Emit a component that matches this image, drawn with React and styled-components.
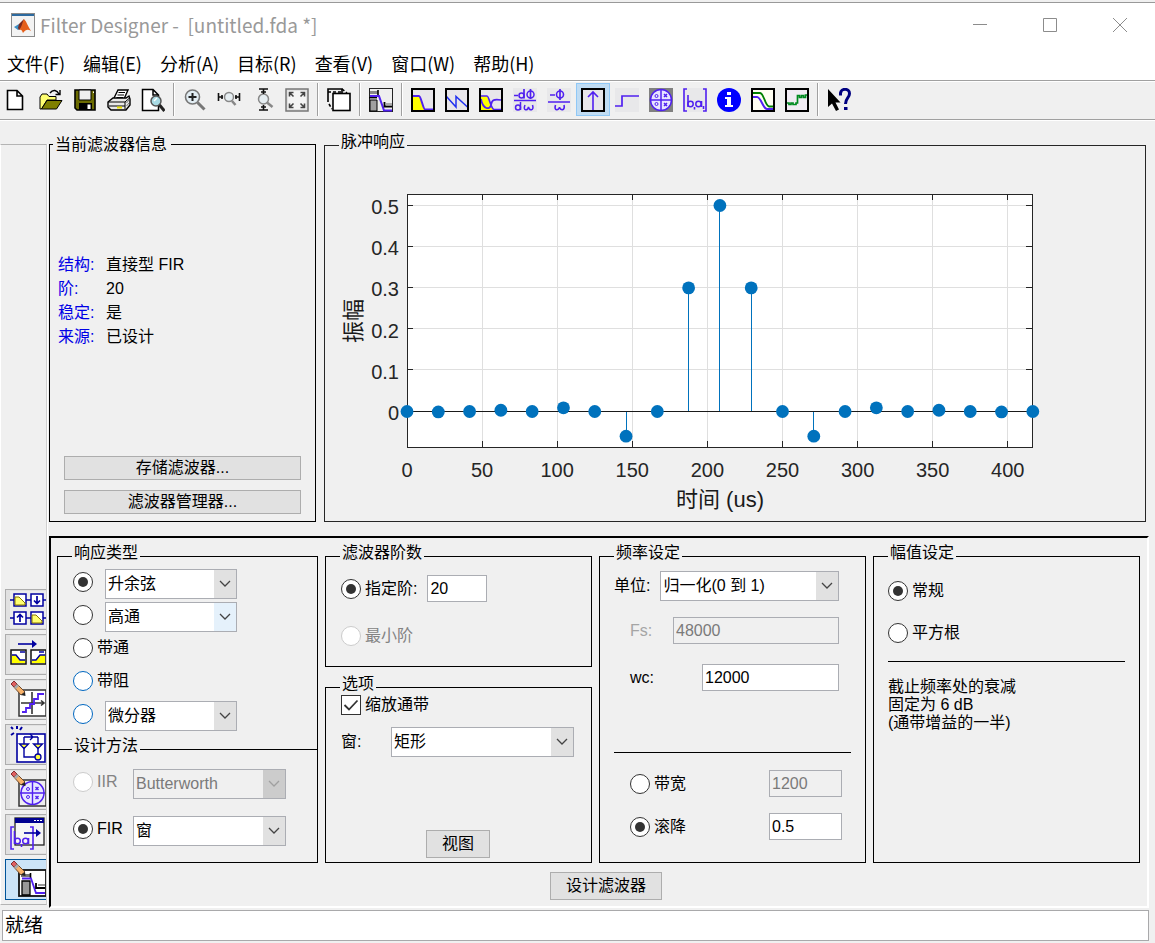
import React from 'react';
import styled, { createGlobalStyle, css } from 'styled-components';

const UI = '"Liberation Sans", "Noto Sans CJK SC", sans-serif';

const GlobalStyle = createGlobalStyle`
  *, *::before, *::after { box-sizing: border-box; }
  body { margin: 0; background: #f0f0f0; font: 16px/20px ${UI}; color: #000; }
  button, input, select { font: inherit; color: inherit; margin: 0; }
`;

/* ---------- window frame ---------- */

const Window = styled.div`
  display: flex;
  flex-direction: column;
  min-height: 100vh;
  padding-top: 2px;
  background: #f0f0f0;
`;

const TitleBar = styled.header`
  display: flex;
  align-items: center;
  height: 44px;
  padding-left: 11px;
  background: #fff;
  border-top: 1px solid #999;
`;

const Title = styled.h1`
  flex: 1;
  margin: 0 0 0 5px;
  font: 19px/28px "Noto Sans CJK SC", sans-serif;
  color: #999;
  white-space: pre;
`;

const WindowButton = styled.button`
  display: grid;
  place-items: center;
  width: 70px;
  height: 40px;
  padding: 0;
  border: 0;
  background: none;
`;

const MenuBar = styled.nav`
  display: flex;
  gap: 18px;
  height: 34px;
  padding: 0 7px;
  background: #fff;
`;

const MenuItem = styled.button`
  padding: 0;
  border: 0;
  background: none;
  font: 18px/34px "Noto Sans CJK SC", sans-serif;
  white-space: nowrap;
`;

const ToolBar = styled.div`
  display: flex;
  align-items: flex-start;
  height: 41px;
  padding-top: 2px;
  border-top: 1px solid #a0a0a0;
  border-bottom: 1px solid #fff;
  box-shadow: inset 0 1px #fff, inset 0 -1px #a0a0a0;
`;

const ToolButton = styled.button`
  display: grid;
  place-items: center;
  width: 34px;
  height: 33px;
  padding: 0;
  border: 1px solid ${(p) => (p.$active ? '#90c8f6' : 'transparent')};
  background: ${(p) => (p.$active ? '#c0dcf3' : 'none')};
`;

const ToolSeparator = styled.span`
  width: 2px;
  height: 33px;
  margin: 0 3px;
  border-left: 1px solid #a0a0a0;
  border-right: 1px solid #fff;
`;

const Body = styled.div`
  display: flex;
  flex: 1;
`;

const Rail = styled.aside`
  display: flex;
  flex-direction: column;
  justify-content: flex-end;
  gap: 4px;
  width: 47px;
  margin: 23px 2px 4px 0;
  padding: 0 0 4px 4px;
  border: 1px solid #b4b4b4;
  border-left-color: #fff;
  border-right: 1px solid #d0d0d0;
  box-shadow: 1px 0 #fff;
`;

const RailButton = styled.button`
  display: grid;
  align-items: center;
  height: 41px;
  padding: 0 0 0 4px;
  overflow: hidden;
  border: 1px solid ${(p) => (p.$active ? '#005499' : '#adadad')};
  border-right: 0;
  background: ${(p) => (p.$active ? '#cce4f7' : '#e1e1e1')};
`;

const Main = styled.main`
  flex: 1;
  min-width: 0;
  padding-top: 12px;
`;

const TopRow = styled.div`
  display: grid;
  grid-template-columns: minmax(0, 267fr) minmax(0, 822fr);
  gap: 8px;
  padding-right: 9px;
`;

const StatusBar = styled.footer`
  height: 31px;
  margin: 1px 6px 2px 2px;
  padding: 0 2px;
  border: 1px solid #a9a9ab;
  background: #fff;
  font-size: 19px;
  line-height: 30px;
`;

/* ---------- group boxes ---------- */

const Group = styled.fieldset`
  display: flex;
  flex-direction: column;
  min-width: 0;
  margin: 0;
  padding: 0;
  border: 1px solid ${(p) => p.$line || '#000'};
  ${(p) => p.$open && css`border-bottom: 0;`}
  ${(p) => p.$joined && css`margin-top: -12px;`}
`;

const Legend = styled.legend`
  margin-left: ${(p) => (p.$level ? 3 : 14)}px;
  padding: ${(p) => (p.$level ? '4px 4px 2px 2px' : '1px 2px 7px 2px')};
  line-height: 16px;
`;

const GroupBody = styled.div`
  display: flex;
  flex-direction: column;
  flex: 1;
  gap: ${(p) => p.$gap || 0}px;
  margin-top: -8px;
  padding: ${(p) => p.$pad || '0'};
`;

const InfoBody = styled.div`
  display: flex;
  flex-direction: column;
  flex: 1;
  gap: 10px;
  padding: 98px 14px 7px;
`;

const InfoList = styled.dl`
  display: grid;
  grid-template-columns: 48px 1fr;
  margin: 0 -6px auto;
  line-height: 24px;
  dt { color: #0000e6; }
  dd { margin: 0; }
`;

const PushButton = styled.button`
  height: ${(p) => (p.$wide ? 24 : 28)}px;
  padding: 0 15px;
  border: 1px solid #adadad;
  background: #e1e1e1;
  line-height: 20px;
  white-space: nowrap;
`;

/* ---------- design panel ---------- */

const DesignPanel = styled.section`
  display: flex;
  flex-direction: column;
  margin: 14px 6px 0 0;
  padding: 6px 7px 6px 6px;
  border: 2px solid #fff;
  border-top-color: #000;
  border-left-color: #000;
`;

const Columns = styled.div`
  display: grid;
  grid-template-columns: minmax(0, 261fr) repeat(3, minmax(0, 267fr));
  gap: 7px;
`;

const Column = styled.div`
  display: flex;
  flex-direction: column;
  gap: ${(p) => p.$gap || 0}px;
  > :last-child { flex: 1; }
`;

const DesignAction = styled.div`
  display: flex;
  justify-content: center;
  padding: 9px 0 0 15px;
`;

const OptionRow = styled.div`
  display: flex;
  gap: 12px;
  height: 30px;
`;

const FieldRow = styled.div`
  display: flex;
  align-items: center;
  justify-content: ${(p) => (p.$start ? 'flex-start' : 'space-between')};
  gap: 10px;
  margin-top: ${(p) => p.$top || 0}px;
  padding-left: ${(p) => p.$indent || 0}px;
  padding-right: ${(p) => (p.$wide ? 9 : 12)}px;
  height: ${(p) => p.$h || 27}px;
`;

const Choice = styled.label`
  display: flex;
  align-items: center;
  gap: 4px;
  height: ${(p) => p.$h || 26}px;
  ${(p) => p.$w && css`width: ${p.$w}px;`}
  color: ${(p) => (p.$off ? '#838383' : '#000')};
  white-space: nowrap;
`;

const Radio = styled.input.attrs({ type: 'radio' })`
  appearance: none;
  display: grid;
  place-items: center;
  flex: none;
  width: 20px;
  height: 20px;
  border: 1px solid ${(p) => (p.$hot ? '#0067c0' : '#333')};
  border-radius: 50%;
  background: #fff;
  &:checked::before {
    content: '';
    width: 10px;
    height: 10px;
    border-radius: 50%;
    background: #333;
  }
  &:disabled { border-color: #ccc; }
`;

const CheckCell = styled.span`
  display: grid;
  width: 20px;
  height: 20px;
  > * { grid-area: 1 / 1; }
  svg { pointer-events: none; }
`;

const CheckBox = styled.input.attrs({ type: 'checkbox' })`
  appearance: none;
  width: 20px;
  height: 20px;
  border: 1px solid #333;
  background: #fff;
`;

const TextBox = styled.input.attrs({ type: 'text' })`
  flex: none;
  width: ${(p) => p.$w}px;
  height: 27px;
  padding: 0 2px;
  border: 1px solid #abadb3;
  border-radius: 0;
  background: #fff;
  &:disabled { background: #f0f0f0; color: #7a7a7a; }
`;

const Caption = styled.label`
  flex: none;
  color: ${(p) => (p.$off ? '#a5a5a5' : '#000')};
  white-space: nowrap;
  ${(p) => p.$w && css`width: ${p.$w}px;`}
`;

const SelectCell = styled.span`
  display: grid;
  flex: none;
  width: ${(p) => p.$w}px;
  height: 30px;
  border: 1px solid #abadb3;
  background: ${(p) => (p.$off ? '#f0f0f0' : '#fff')};
  > * { grid-area: 1 / 1; }
`;

const SelectControl = styled.select`
  appearance: none;
  width: 100%;
  padding: 0 24px 0 2px;
  border: 0;
  background: none;
  &:disabled { color: #7a7a7a; opacity: 1; }
`;

const SelectArrow = styled.span`
  display: grid;
  place-items: center;
  justify-self: end;
  width: 22px;
  pointer-events: none;
  background: ${(p) => (p.$off ? '#ccc' : p.$hot ? '#e5f1fb' : '#e1e1e1')};
`;

const Rule = styled.hr`
  width: 100%;
  margin: ${(p) => p.$top}px 0 ${(p) => p.$bottom}px;
  border: 0;
  border-top: 1px solid #000;
`;

const Note = styled.p`
  margin: 0;
  line-height: 18px;
`;

const ViewRow = styled.div`
  display: flex;
  margin-top: 61px;
  padding-left: 85px;
`;

const ChartSvg = styled.svg`
  display: block;
  width: 100%;
  height: auto;
  font-family: ${UI};
`;

/* ---------- small pieces ---------- */

function Dropdown({ id, label, value, width, disabled, hot }) {
  return (
    <SelectCell $w={width} $off={disabled}>
      <SelectControl id={id} aria-label={label} disabled={disabled} defaultValue={value}>
        <option>{value}</option>
      </SelectControl>
      <SelectArrow $off={disabled} $hot={hot}>
        <svg width="12" height="8" viewBox="0 0 12 8" fill="none" stroke={disabled ? '#a0a0a0' : '#444'} strokeWidth="1.3">
          <path d="M1 1L6 6L11 1" />
        </svg>
      </SelectArrow>
    </SelectCell>
  );
}

const V = '#5020f0';

function Box({ fill = '#e8e6ea', children }) {
  return (
    <>
      <rect x="1" y="1" width="22" height="22" fill={fill} />
      {children}
      <rect x="1" y="1" width="22" height="22" fill="none" stroke="#000" strokeWidth="2" />
    </>
  );
}

const toolIcons = {
  新建: <path d="M2.500 2.500H12L17.500 8V21.500H2.500ZM12 2.500V8H17.500" fill="#fff" stroke="#000" strokeWidth="1.600" />,
  打开: (
    <>
      <path d="M1 21V9L3 6H8L10 8.500H17V12H8L2.500 21Z" fill="#ffff70" stroke="#000" />
      <path d="M2.500 21L8 12.500H23L17.500 21Z" fill="#808000" stroke="#000" />
      <path d="M11 5C14 1 18 2 20 6M21 2V6.500H16.500" fill="none" stroke="#000" strokeWidth="1.400" />
    </>
  ),
  保存: (
    <>
      <path d="M2 2H22V22H4L2 20Z" fill="#6b6b00" stroke="#000" strokeWidth="1.600" />
      <path d="M6 2H18V12H6Z" fill="#efefef" stroke="#000" />
      <path d="M6 15H19V22H6Z" fill="#000" />
      <path d="M14.500 16.500H17.500V21H14.500Z" fill="#fff" />
      <path d="M20 3.500H21V5H20Z" fill="#fff" />
    </>
  ),
  打印: (
    <>
      <path d="M7 10L11 2H21L17 11" fill="#fff" stroke="#000" strokeWidth="1.400" />
      <path d="M11.500 4.500H18M10.500 7H17M9.500 9.500H16" stroke="#000" />
      <path d="M1 14L6 10H19L22 8L23 11V17L19 22H4L1 19Z" fill="#e8e8e8" stroke="#000" strokeWidth="1.400" />
      <path d="M1 14H18L22.500 10M18 14V21M2 18H18" fill="none" stroke="#000" />
      <path d="M10 18.500H15V20.500H10Z" fill="#e8e000" />
      <path d="M19.500 15L22 12M19.500 18L22 15" stroke="#777" />
    </>
  ),
  打印预览: (
    <>
      <path d="M1.500 1.500H12L17.500 7V22.500H1.500ZM12 1.500V7H17.500" fill="#fff" stroke="#000" strokeWidth="1.500" />
      <circle cx="15" cy="13" r="5" fill="#a9dbe4" stroke="#555" strokeWidth="1.500" />
      <path d="M13 13L16 10" stroke="#fff" strokeWidth="1.500" />
      <path d="M18.500 17L23.500 23" stroke="#222" strokeWidth="3" />
    </>
  ),
  放大: (
    <>
      <circle cx="9.500" cy="9" r="7" fill="#e2edf3" stroke="#777" strokeWidth="1.600" />
      <path d="M5.500 9H13.500M9.500 5V13" stroke="#222" strokeWidth="2" />
      <path d="M14.500 14.500L21.500 21.500" stroke="#777" strokeWidth="3" />
    </>
  ),
  水平缩放: (
    <>
      <circle cx="12" cy="9" r="4.500" fill="#e6eef2" stroke="#888" strokeWidth="1.500" />
      <path d="M15 13L18.500 17" stroke="#888" strokeWidth="2.500" />
      <path d="M1.500 5V13M22.500 5V13M2 9H6M18 9H22M5 7V11M19 7V11" stroke="#111" strokeWidth="1.600" />
    </>
  ),
  垂直缩放: (
    <>
      <circle cx="12.500" cy="11" r="5" fill="#e6eef2" stroke="#888" strokeWidth="1.500" />
      <path d="M16 14.500L21.500 19" stroke="#888" strokeWidth="2.500" />
      <path d="M8 1H17M8 22H17M12.500 1V6M12.500 17V22M10 4H15M10 19H15" stroke="#111" strokeWidth="1.600" />
    </>
  ),
  还原视图: (
    <>
      <rect x="1" y="1" width="22" height="22" fill="#e3e3e3" stroke="#777" strokeWidth="1.500" />
      <rect x="3" y="3" width="18" height="18" fill="#f4f4f4" />
      <path d="M4.500 8.500V4.500H8.500M4.500 4.500L8.500 8.500M15.500 4.500H19.500V8.500M19.500 4.500L15.500 8.500M4.500 15.500V19.500H8.500M4.500 19.500L8.500 15.500M15.500 19.500H19.500V15.500M19.500 19.500L15.500 15.500" fill="none" stroke="#444" strokeWidth="1.600" />
    </>
  ),
  新建图窗: (
    <>
      <path d="M1 14V1H15V5" fill="#efefef" stroke="#000" strokeWidth="1.600" />
      <path d="M1 4H15M15 1L20 5M2 16L5 21" stroke="#000" strokeDasharray="3 2" strokeWidth="1.600" />
      <rect x="6" y="5.500" width="17" height="17" fill="#fff" stroke="#000" strokeWidth="1.600" />
    </>
  ),
  滤波器设定: (
    <>
      <rect x="0.500" y="0.500" width="23" height="23" fill="#efefef" stroke="#222" />
      <path d="M1 12H8V23H1Z" fill="#a0a0a0" stroke="#000" />
      <path d="M1 3H9V6H1Z" fill="#888" />
      <path d="M9 2V7" stroke="#000" strokeWidth="1.600" />
      <path d="M1 8H10L15 22.500H23" fill="none" stroke={V} strokeWidth="2" />
      <path d="M0 9.700H8" stroke="#000" strokeWidth="1.400" />
      <path d="M15.500 14V18.500H23" fill="none" stroke="#000" strokeWidth="1.800" />
      <path d="M17 15H23V17.500H17Z" fill="#aaa" />
    </>
  ),
  幅值响应: (
    <Box>
      <path d="M2 8H9L14 22H2Z" fill="#ffff00" />
      <path d="M2 8H8C10 8 12 21 14 21.500H22" fill="none" stroke={V} strokeWidth="2" />
    </Box>
  ),
  相位响应: (
    <Box>
      <path d="M1 8L11 19V8.500L23 19.500" fill="none" stroke="#2030f0" strokeWidth="1.500" />
    </Box>
  ),
  幅值和相位响应: (
    <Box>
      <path d="M2 8H8L14 22H2Z" fill="#ffff00" />
      <path d="M2 8H8C10 8 12 21 15 21.500H22M2 11C4 22 11 22 12 17S14 11 22 12" fill="none" stroke={V} strokeWidth="1.700" />
    </Box>
  ),
  群延迟: (
    <>
      <rect width="24" height="24" fill="#e8e8ea" />
      <path d="M1 12.500H23M1 7.500H5M11 1V10.500M17.500 1V11" stroke={V} strokeWidth="1.700" />
      <circle cx="8.500" cy="7.500" r="2.500" fill="none" stroke={V} strokeWidth="1.500" />
      <circle cx="17.500" cy="6.500" r="3.500" fill="none" stroke={V} strokeWidth="1.500" />
      <circle cx="5" cy="19.500" r="2.500" fill="none" stroke={V} strokeWidth="1.500" />
      <path d="M7.500 14V22M12 17C9.500 23 14.500 23 15.500 19C16.500 23 21.500 23 19.500 17" fill="none" stroke={V} strokeWidth="1.500" />
    </>
  ),
  相位延迟: (
    <>
      <rect width="24" height="24" fill="#e8e8ea" />
      <path d="M1 14H23M3 7H8M13 1V12" stroke={V} strokeWidth="1.700" />
      <circle cx="13" cy="6.500" r="3.500" fill="none" stroke={V} strokeWidth="1.600" />
      <path d="M8.500 17C6.500 23 12 23 12.500 19C13 23 18.500 23 17 17" fill="none" stroke={V} strokeWidth="1.600" />
    </>
  ),
  脉冲响应: (
    <Box>
      <path d="M12 23V4M7 9L12 4L17 9" fill="none" stroke={V} strokeWidth="1.600" />
    </Box>
  ),
  阶跃响应: (
    <>
      <rect width="24" height="24" fill="#e8e8ea" />
      <path d="M0 18H7V8H24" fill="none" stroke={V} strokeWidth="1.700" />
    </>
  ),
  零极点图: (
    <>
      <rect width="24" height="24" fill="#808080" />
      <circle cx="12" cy="12" r="10.500" fill="#e8e4ff" stroke={V} strokeWidth="1.500" />
      <path d="M12 1V23M1 12H23M15 6L18 9M18 6L15 9M15 15L18 18M18 15L15 18" stroke={V} strokeWidth="1.500" />
      <circle cx="7.500" cy="8" r="1.500" fill="none" stroke={V} />
      <circle cx="7.500" cy="16" r="1.500" fill="none" stroke={V} />
    </>
  ),
  滤波器系数: (
    <>
      <rect width="24" height="24" fill="#e8e8ea" />
      <path d="M4 1H1V23H4M20 1H23V23H20M5 7V19M11.500 19V21.500M18.500 13V19M20.500 18V21" fill="none" stroke={V} strokeWidth="1.600" />
      <circle cx="7.500" cy="16" r="2.700" fill="none" stroke={V} strokeWidth="1.500" />
      <circle cx="15.500" cy="16" r="2.700" fill="none" stroke={V} strokeWidth="1.500" />
    </>
  ),
  滤波器信息: (
    <>
      <circle cx="12" cy="12" r="12" fill="#0000ff" />
      <path d="M10 4H14V7H10ZM8 9H14V17H16V19H8V17H10V11H8Z" fill="#fff" />
    </>
  ),
  幅值估计: (
    <Box fill="#fffef2">
      <path d="M2 9H6C10 9 12 21 16 21H22" fill="none" stroke={V} strokeWidth="2" />
      <path d="M2 5H9C13 5 14 18 18 18.500H22" fill="none" stroke="#008000" strokeWidth="1.800" />
    </Box>
  ),
  舍入噪声: (
    <Box fill="#f1ecf4">
      <path d="M2 15H4V16.500H6V15H8V16.500H11V15H12.500V7.500H14.500V9.500H16.500V7.500H18.500V9.500H20.500V7H22" fill="none" stroke="#008a20" strokeWidth="1.700" />
    </Box>
  ),
  这是什么: (
    <>
      <path d="M1 1V19L5 15.500L9 23L12 21.500L8.500 14.500H13.500Z" fill="#000" />
      <path d="M13.500 7.500V5C14 0 22.500 0 22.500 5.500C22.500 10 18.500 10 18.500 16" fill="none" stroke="#000080" strokeWidth="3" />
      <path d="M17 19H20.500V22H17Z" fill="#000080" />
    </>
  ),
};

const toolGroups = [
  ['新建', '打开', '保存', '打印', '打印预览'],
  ['放大', '水平缩放', '垂直缩放', '还原视图'],
  ['新建图窗'],
  ['滤波器设定'],
  ['幅值响应', '相位响应', '幅值和相位响应', '群延迟', '相位延迟', '脉冲响应', '阶跃响应', '零极点图', '滤波器系数', '滤波器信息', '幅值估计', '舍入噪声'],
  ['这是什么'],
];

const N = '#0000a0';

function Pencil() {
  return (
    <>
      <path d="M2 4L5 1L15 11L11 14Z" fill="#f7b26a" stroke="#6b4a30" />
      <path d="M1 3L4 0L7 3L4 6Z" fill="#e06060" stroke="#803030" />
      <path d="M4 6L7 3L9 5L6 8Z" fill="#aaa" />
      <path d="M11 14L15 11L15.500 15Z" fill="#222" />
    </>
  );
}

const railIcons = [
  ['创建多速率滤波器', (
    <>
      <path d="M0 9H36M0 27H36" stroke={N} strokeWidth="1.500" />
      {[[4, 3], [21, 3], [4, 21], [21, 21]].map(([x, y]) => (
        <rect key={`${x}-${y}`} x={x} y={y} width="12" height="12" fill="#fff" stroke={N} strokeWidth="1.500" />
      ))}
      <path d="M5 6H9L15 12V14H5ZM22 24H26L32 30V32H22Z" fill="#ffff70" stroke="#887700" />
      <path d="M27 5V12M24 9.500L27 12.500L30 9.500M10 31V24M7 26.500L10 23.500L13 26.500" fill="none" stroke={N} strokeWidth="1.700" />
    </>
  )],
  ['变换滤波器', (
    <>
      <path d="M8 8H25" stroke={N} strokeWidth="1.600" />
      <path d="M22 4L27 8L22 12Z" fill={N} />
      <rect x="1" y="14" width="15" height="14" fill="#fff" stroke="#111" strokeWidth="1.500" />
      <rect x="21" y="14" width="15" height="14" fill="#fff" stroke="#111" strokeWidth="1.500" />
      <path d="M2 19H6L10 24H15V27H2ZM22 24H26L30 19H35V27H22Z" fill="#ffff00" />
      <path d="M2 19H6L10 24H15M22 24H26L30 19H35M10 16H15M29 16H34" fill="none" stroke={N} strokeWidth="1.400" />
    </>
  )],
  ['设置量化参数', (
    <>
      <rect x="9" y="9" width="27" height="26" fill="#fff" stroke="#333" strokeWidth="1.500" />
      <path d="M11 22H34M22 11V33M31 19.500L34 22L31 24.500" fill="none" stroke="#333" strokeWidth="1.600" />
      <path d="M12 31H16V27H20V23H24V18H28V13H34" fill="none" stroke={V} strokeWidth="1.800" />
      <Pencil />
    </>
  )],
  ['实现模型', (
    <>
      <path d="M1 1L3 3M7 0V3M12 1L10 4M1 9L4 7" stroke={N} strokeWidth="2" />
      <rect x="7" y="8" width="28" height="28" fill="#fff" stroke={N} strokeWidth="1.600" />
      <path d="M14 11H28M14 11V31H25M28 11V31M20 8L23 11L20 14" fill="none" stroke={N} strokeWidth="1.400" />
      <path d="M9.500 18H18.500L14 22.500ZM23.500 18H32.500L28 22.500Z" fill="#ffff40" stroke={N} strokeWidth="1.300" />
      <circle cx="28" cy="31" r="3" fill="#ffff40" stroke={N} strokeWidth="1.300" />
    </>
  )],
  ['零极点编辑器', (
    <>
      <rect x="9" y="9" width="27" height="26" fill="#eee" stroke="#333" strokeWidth="1.500" />
      <circle cx="22.500" cy="22" r="11.500" fill="#e8e8ff" stroke={V} strokeWidth="1.500" />
      <path d="M22.500 10V34M10 22H35M25.500 16L28.500 19M28.500 16L25.500 19M25.500 25L28.500 28M28.500 25L25.500 28" stroke={V} strokeWidth="1.400" />
      <circle cx="18" cy="18" r="1.500" fill="none" stroke={V} />
      <circle cx="18" cy="26" r="1.500" fill="none" stroke={V} />
      <Pencil />
    </>
  )],
  ['导入滤波器', (
    <>
      <rect x="5" y="2" width="29" height="27" fill="#f5f5f5" stroke="#222" strokeWidth="1.300" />
      <path d="M5 2H34V7H5Z" fill="#000090" />
      <path d="M24 4.500H32" stroke="#fff" strokeDasharray="2 1" />
      <path d="M4 11H1V33H4M20 11H23V33H20M4.500 15V28M11.500 28V31M18.500 22V28" fill="none" stroke={V} strokeWidth="1.600" />
      <circle cx="7.500" cy="25" r="2.800" fill="none" stroke={V} strokeWidth="1.500" />
      <circle cx="15.500" cy="25" r="2.800" fill="none" stroke={V} strokeWidth="1.500" />
      <path d="M14 17H28" stroke={N} strokeWidth="1.600" />
      <path d="M26 13L31 17L26 21Z" fill={N} />
    </>
  )],
  ['设计滤波器', (
    <>
      <rect x="9" y="9" width="27" height="26" fill="#fff" stroke="#111" strokeWidth="1.800" />
      <path d="M12 20H20V34H12Z" fill="#999" stroke="#000" strokeWidth="1.300" />
      <path d="M11 13H20V16H11Z" fill="#777" />
      <path d="M20.500 12V17" stroke="#000" strokeWidth="1.600" />
      <path d="M12 17.500H21L26 32H35" fill="none" stroke={V} strokeWidth="1.800" />
      <path d="M26 22V27H35" fill="none" stroke="#000" strokeWidth="1.800" />
      <path d="M28 23H35V25H28Z" fill="#999" />
      <Pencil />
    </>
  )],
];

/* ---------- impulse response chart ---------- */

const PLOT = { left: 82, top: 45, width: 625, height: 253, zero: 262 };
const response = [0, -0.001, 0, 0.003, 0, 0.009, 0, -0.06, 0, 0.3, 0.5, 0.3, 0, -0.06, 0, 0.009, 0, 0.003, 0, -0.001, 0];
const xTicks = [0, 50, 100, 150, 200, 250, 300, 350, 400];
const yTicks = [0, 0.1, 0.2, 0.3, 0.4, 0.5];
const toX = (us) => PLOT.left + us * 1.502;
const toY = (v) => PLOT.zero - v * 412;

function ImpulseChart() {
  const right = PLOT.left + PLOT.width;
  const bottom = PLOT.top + PLOT.height;
  return (
    <ChartSvg viewBox="0 0 820 372" role="img" aria-label="脉冲响应">
      <rect x={PLOT.left} y={PLOT.top} width={PLOT.width} height={PLOT.height} fill="#fff" />
      <g shapeRendering="crispEdges">
        {xTicks.slice(1).map((t) => (
          <React.Fragment key={t}>
            <path d={`M${toX(t)} ${PLOT.top}V${bottom}`} stroke="#dfdfdf" />
            <path d={`M${toX(t)} ${PLOT.top}v6M${toX(t)} ${bottom}v-6`} stroke="#262626" />
          </React.Fragment>
        ))}
        {yTicks.slice(1).map((t) => (
          <React.Fragment key={t}>
            <path d={`M${PLOT.left} ${toY(t)}H${right}`} stroke="#dfdfdf" />
            <path d={`M${PLOT.left} ${toY(t)}h6M${right} ${toY(t)}h-6`} stroke="#262626" />
          </React.Fragment>
        ))}
        <rect x={PLOT.left} y={PLOT.top} width={PLOT.width} height={PLOT.height} fill="none" stroke="#262626" />
        {response.map((v, i) => (
          <path key={i} d={`M${toX(i * 20.833)} ${PLOT.zero}V${toY(v)}`} stroke="#0072bd" />
        ))}
        <path d={`M${PLOT.left} ${PLOT.zero}H${right}`} stroke="#1a1a1a" />
      </g>
      {response.map((v, i) => (
        <circle key={i} cx={toX(i * 20.833)} cy={toY(v) + 0.5} r="6.400" fill="#0072bd" />
      ))}
      <g fontSize="20" fill="#262626">
        {xTicks.map((t) => (
          <text key={t} x={toX(t)} y="328" textAnchor="middle">{t}</text>
        ))}
        {yTicks.map((t) => (
          <text key={t} x="74" y={toY(t) + 9} textAnchor="end">{t}</text>
        ))}
      </g>
      <g fontSize="22" fill="#1a1a1a" textAnchor="middle">
        <text x="395" y="358">时间 (us)</text>
        <text transform="translate(36 172) rotate(-90)">振幅</text>
      </g>
    </ChartSvg>
  );
}

/* ---------- page ---------- */

const menus = ['文件(F)', '编辑(E)', '分析(A)', '目标(R)', '查看(V)', '窗口(W)', '帮助(H)'];

const windowButtons = [
  ['最小化', 'M1 7.500H15'],
  ['最大化', 'M1.500 1.500H14.500V14.500H1.500Z'],
  ['关闭', 'M1 1L15 15M15 1L1 15'],
];

export default function App() {
  return (
    <Window>
      <GlobalStyle />
      <TitleBar>
        <svg width="24" height="24" viewBox="0 0 24 24" aria-hidden="true">
          <rect x="0.500" y="0.500" width="23" height="23" fill="#f3f3f3" stroke="#8a8a8a" />
          <path d="M1 1H23V3H1Z" fill="#2d6a9f" />
          <path d="M3 14L8 11L11 15L7 17Z" fill="#3d8fc4" />
          <path d="M8 11L13 6L12 14L8 17L7 15Z" fill="#7a2a20" />
          <path d="M13 6C16 9 17 14 20 18C17 16 15 16 12 20C11 17 10 16 8 17C11 14 11 10 13 6Z" fill="#e5601c" />
        </svg>
        <Title>{'Filter Designer -  [untitled.fda *]'}</Title>
        {windowButtons.map(([name, d]) => (
          <WindowButton key={name} aria-label={name}>
            <svg width="16" height="16" viewBox="0 0 16 16" fill="none" stroke="#8c8c8c"><path d={d} /></svg>
          </WindowButton>
        ))}
      </TitleBar>
      <MenuBar>
        {menus.map((m) => <MenuItem key={m}>{m}</MenuItem>)}
      </MenuBar>
      <ToolBar role="toolbar">
        {toolGroups.map((group, g) => (
          <React.Fragment key={group[0]}>
            {g > 0 && <ToolSeparator />}
            {group.map((name) => (
              <ToolButton key={name} aria-label={name} $active={name === '脉冲响应'}>
                <svg width="24" height="24" viewBox="0 0 24 24">{toolIcons[name]}</svg>
              </ToolButton>
            ))}
          </React.Fragment>
        ))}
      </ToolBar>

      <Body>
        <Rail>
          {railIcons.map(([name, art], i) => (
            <RailButton key={name} aria-label={name} $active={i === railIcons.length - 1}>
              <svg width="37" height="37" viewBox="0 0 37 37">
                {i < railIcons.length - 1 && <rect width="37" height="37" fill="#ececec" />}
                {art}
              </svg>
            </RailButton>
          ))}
        </Rail>

        <Main>
          <TopRow>
            <Group>
              <Legend $level>当前滤波器信息</Legend>
              <InfoBody>
                <InfoList>
                  <dt>结构:</dt><dd>直接型 FIR</dd>
                  <dt>阶:</dt><dd>20</dd>
                  <dt>稳定:</dt><dd>是</dd>
                  <dt>来源:</dt><dd>已设计</dd>
                </InfoList>
                <PushButton $wide>存储滤波器...</PushButton>
                <PushButton $wide>滤波器管理器...</PushButton>
              </InfoBody>
            </Group>
            <Group $line="#262626">
              <Legend>脉冲响应</Legend>
              <GroupBody><ImpulseChart /></GroupBody>
            </Group>
          </TopRow>

          <DesignPanel>
            <Columns>
              <Column>
                <Group $open>
                  <Legend>响应类型</Legend>
                  <GroupBody $gap={3} $pad="9px 15px 18px">
                    <OptionRow>
                      <Choice><Radio name="response" aria-label="升余弦" defaultChecked /></Choice>
                      <Dropdown label="升余弦类型" value="升余弦" width={132} />
                    </OptionRow>
                    <OptionRow>
                      <Choice><Radio name="response" aria-label="高通" /></Choice>
                      <Dropdown label="高通类型" value="高通" width={132} hot />
                    </OptionRow>
                    <OptionRow><Choice><Radio name="response" />带通</Choice></OptionRow>
                    <OptionRow><Choice><Radio name="response" $hot />带阻</Choice></OptionRow>
                    <OptionRow>
                      <Choice><Radio name="response" aria-label="微分器" $hot /></Choice>
                      <Dropdown label="微分器类型" value="微分器" width={132} />
                    </OptionRow>
                  </GroupBody>
                </Group>
                <Group $joined>
                  <Legend>设计方法</Legend>
                  <GroupBody $gap={17} $pad="16px 15px">
                    <OptionRow>
                      <Choice $w={48} $off><Radio name="method" disabled />IIR</Choice>
                      <Dropdown label="IIR 方法" value="Butterworth" width={153} disabled />
                    </OptionRow>
                    <OptionRow>
                      <Choice $w={48}><Radio name="method" defaultChecked />FIR</Choice>
                      <Dropdown label="FIR 方法" value="窗" width={153} />
                    </OptionRow>
                  </GroupBody>
                </Group>
              </Column>

              <Column $gap={8}>
                <Group>
                  <Legend>滤波器阶数</Legend>
                  <GroupBody $gap={20} $pad="15px 15px 17px">
                    <FieldRow $start>
                      <Choice><Radio name="order" defaultChecked />指定阶:</Choice>
                      <TextBox aria-label="指定阶" defaultValue="20" $w={60} />
                    </FieldRow>
                    <FieldRow>
                      <Choice $off><Radio name="order" disabled />最小阶</Choice>
                    </FieldRow>
                  </GroupBody>
                </Group>
                <Group>
                  <Legend>选项</Legend>
                  <GroupBody $gap={12} $pad="4px 0 4px 15px">
                    <Choice $h={20}>
                      <CheckCell>
                        <CheckBox defaultChecked />
                        <svg width="20" height="20" viewBox="0 0 20 20" fill="none" stroke="#333" strokeWidth="1.800"><path d="M3.500 10L8 14.500L16.500 5.500" /></svg>
                      </CheckCell>
                      缩放通带
                    </Choice>
                    <FieldRow $start $h={30}>
                      <Caption htmlFor="window" $w={40}>窗:</Caption>
                      <Dropdown id="window" value="矩形" width={183} />
                    </FieldRow>
                    <ViewRow>
                      <PushButton>视图</PushButton>
                    </ViewRow>
                  </GroupBody>
                </Group>
              </Column>

              <Column>
                <Group>
                  <Legend>频率设定</Legend>
                  <GroupBody $pad="11px 14px 22px">
                    <FieldRow $h={30}>
                      <Caption htmlFor="units">单位:</Caption>
                      <Dropdown id="units" value="归一化(0 到 1)" width={179} />
                    </FieldRow>
                    <FieldRow $top={16} $indent={16}>
                      <Caption htmlFor="fs" $off>Fs:</Caption>
                      <TextBox id="fs" defaultValue="48000" disabled $w={166} />
                    </FieldRow>
                    <FieldRow $top={20} $indent={16}>
                      <Caption htmlFor="wc">wc:</Caption>
                      <TextBox id="wc" defaultValue="12000" $w={137} />
                    </FieldRow>
                    <Rule $top={61} $bottom={17} />
                    <FieldRow $indent={16} $wide>
                      <Choice><Radio name="band" />带宽</Choice>
                      <TextBox aria-label="带宽" defaultValue="1200" disabled $w={73} />
                    </FieldRow>
                    <FieldRow $top={16} $indent={16} $wide>
                      <Choice><Radio name="band" defaultChecked />滚降</Choice>
                      <TextBox aria-label="滚降" defaultValue="0.5" $w={73} />
                    </FieldRow>
                  </GroupBody>
                </Group>
              </Column>

              <Column>
                <Group>
                  <Legend>幅值设定</Legend>
                  <GroupBody $pad="18px 14px">
                    <Choice><Radio name="magnitude" defaultChecked />常规</Choice>
                    <FieldRow $top={15}>
                      <Choice><Radio name="magnitude" />平方根</Choice>
                    </FieldRow>
                    <Rule $top={15} $bottom={16} />
                    <Note>截止频率处的衰减<br />固定为 6 dB<br />(通带增益的一半)</Note>
                  </GroupBody>
                </Group>
              </Column>
            </Columns>
            <DesignAction><PushButton>设计滤波器</PushButton></DesignAction>
          </DesignPanel>
        </Main>
      </Body>
      <StatusBar>就绪</StatusBar>
    </Window>
  );
}
